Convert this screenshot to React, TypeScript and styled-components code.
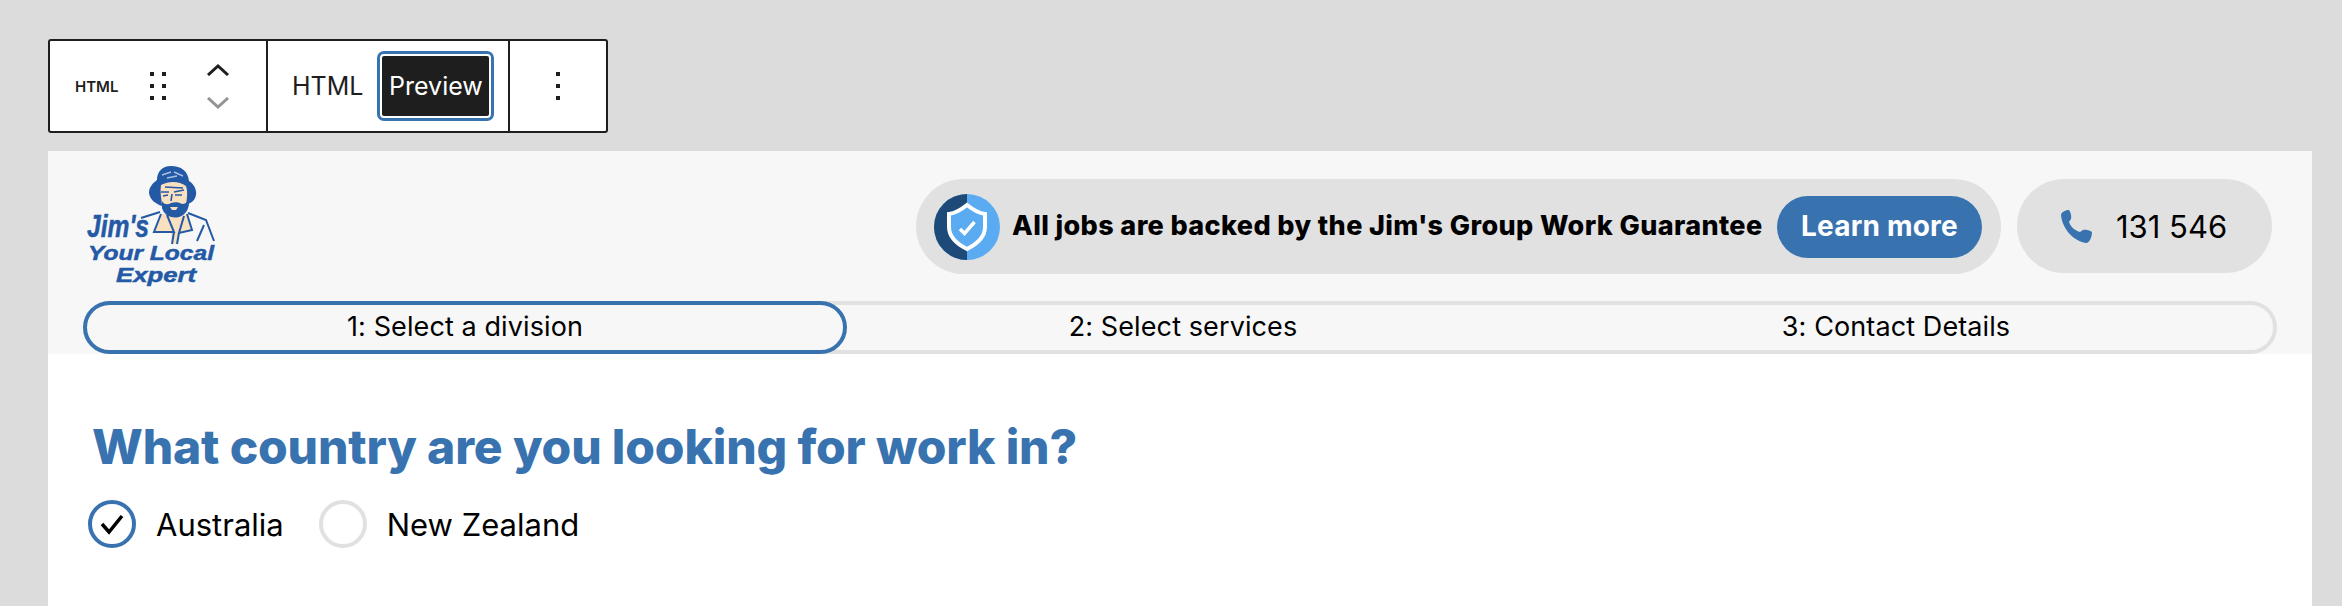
import React from 'react';
import styled, { createGlobalStyle } from 'styled-components';

const BLUE = '#3873b0';
const PILL = '#e1e1e1';
const LOGO_BLUE = '#2359a5';
const SKIN = '#f8e0c0';
const TEXT_FONT = '"Inter", "Liberation Sans", sans-serif';

const GlobalStyle = createGlobalStyle`
  html, body {
    margin: 0;
    background: #dcdcdc;
  }
  body {
    font-family: ${TEXT_FONT};
    color: #000;
  }
`;

const Page = styled.div`
  box-sizing: border-box;
  width: 2342px;
  height: 606px;
  padding: 39px 30px 0 48px;
  overflow: hidden;
`;

const Toolbar = styled.div`
  box-sizing: border-box;
  width: 560px;
  height: 94px;
  margin-bottom: 18px;
  display: flex;
  background: #fff;
  border: 2px solid #1e1e1e;
  border-radius: 3px;
`;

const ToolGroup = styled.div<{ $width: number; $center?: boolean }>`
  box-sizing: border-box;
  width: ${(p) => p.$width}px;
  display: flex;
  align-items: center;
  justify-content: ${(p) => (p.$center ? 'center' : 'flex-start')};
  border-right: 2px solid #1e1e1e;

  &:last-child {
    border-right: 0;
  }
`;

const HtmlBadge = styled.span`
  margin-left: 25px;
  width: 60px;
  font-size: 15px;
  font-weight: 600;
  color: #1e1e1e;
`;

const DragHandle = styled.div`
  display: flex;
  margin-left: 15px;
`;

const Movers = styled.div`
  margin-left: 40px;
  display: flex;
  flex-direction: column;
  gap: 21px;
`;

const ModeLabel = styled.span`
  margin-left: 24px;
  font-size: 25px;
  color: #1e1e1e;
`;

const PreviewButton = styled.button`
  box-sizing: border-box;
  margin-left: 17px;
  width: 111px;
  height: 64px;
  padding: 0;
  font-family: ${TEXT_FONT};
  font-size: 25px;
  color: #fff;
  background: #1e1e1e;
  border: 2px solid #fff;
  border-radius: 4px;
  outline: 3px solid ${BLUE};
`;

const Panel = styled.main`
  width: 2264px;
  height: 455px;
  background: #fff;
`;

const Header = styled.header`
  box-sizing: border-box;
  height: 203px;
  padding: 12px 35px 0;
  background: #f7f7f7;
`;

const TopRow = styled.div`
  display: flex;
  align-items: flex-start;
  height: 130px;
  padding-right: 5px;
  margin-bottom: 8px;
`;

const Logo = styled.svg`
  flex: none;
`;

const LogoText = styled.text`
  font-family: "Liberation Sans", sans-serif;
  font-weight: 700;
  font-style: italic;
  fill: ${LOGO_BLUE};
  stroke: ${LOGO_BLUE};
  stroke-width: 0.5px;
`;

const GuaranteePill = styled.div`
  box-sizing: border-box;
  margin: 16px 0 0 auto;
  width: 1085px;
  height: 95px;
  padding: 0 19px 0 18px;
  display: flex;
  align-items: center;
  background: ${PILL};
  border-radius: 48px;
`;

const BadgeIcon = styled.svg`
  flex: none;
`;

const GuaranteeText = styled.span`
  margin-left: 12px;
  padding-bottom: 2px;
  font-size: 27px;
  font-weight: 800;
  letter-spacing: 0.38px;
  white-space: nowrap;
`;

const LearnMore = styled.a`
  box-sizing: border-box;
  margin-left: auto;
  width: 205px;
  height: 62px;
  padding-bottom: 2px;
  display: flex;
  align-items: center;
  justify-content: center;
  font-size: 28px;
  font-weight: 700;
  letter-spacing: 0.2px;
  color: #fff;
  background: ${BLUE};
  border-radius: 31px;
`;

const PhonePill = styled.div`
  box-sizing: border-box;
  margin: 16px 0 0 16px;
  width: 255px;
  height: 94px;
  padding-left: 43px;
  display: flex;
  align-items: center;
  gap: 24px;
  font-size: 31px;
  background: ${PILL};
  border-radius: 47px;
`;

const Stepper = styled.div`
  box-sizing: border-box;
  height: 53px;
  display: grid;
  grid-template-columns: 760px 672px 1fr;
  border: 4px solid ${PILL};
  border-radius: 27px;
`;

const Step = styled.div<{ $active?: boolean }>`
  padding-bottom: 2px;
  display: flex;
  align-items: center;
  justify-content: center;
  font-size: 27px;
  letter-spacing: 0.1px;
  ${(p) =>
    p.$active &&
    `
    margin: -4px 0 -4px -4px;
    border: 4px solid ${BLUE};
    border-radius: 27px;
  `}
`;

const Content = styled.section`
  padding: 64px 40px 0;
`;

const Title = styled.h1`
  margin: 0 0 24px 4px;
  font-size: 48px;
  line-height: 58px;
  font-weight: 800;
  letter-spacing: -0.15px;
  color: ${BLUE};
  white-space: nowrap;
`;

const Options = styled.div`
  display: flex;
  align-items: center;
`;

const Option = styled.label<{ $gap: number }>`
  display: flex;
  align-items: center;
  margin-right: ${(p) => p.$gap}px;
  font-size: 31px;
`;

const Radio = styled.span<{ $checked?: boolean }>`
  box-sizing: border-box;
  width: 48px;
  height: 48px;
  margin-right: 20px;
  display: flex;
  align-items: center;
  justify-content: center;
  border: 4px solid ${(p) => (p.$checked ? BLUE : PILL)};
  border-radius: 50%;
`;

const Chevron = ({ color, d }: { color: string; d: string }) => (
  <svg width="24" height="12" viewBox="0 0 24 12" fill="none">
    <path d={d} stroke={color} strokeWidth="3" />
  </svg>
);

const Dots = ({ columns }: { columns: number[] }) => {
  const width = columns.length > 1 ? 16 : 5;
  return (
    <svg width={width} height="28" viewBox={`0 0 ${width} 28`} fill="#1e1e1e">
      {columns.map((x) =>
        [0, 12, 24].map((y) => <rect key={`${x}-${y}`} x={x} y={y} width="4" height="4" />)
      )}
    </svg>
  );
};

const JimsLogo = () => (
  <Logo width="140" height="130" viewBox="84 163 140 130">
    {/* hat */}
    <path
      d="M172 166 C182 166 189 171 190 181 C195 184 198 190 197 195 C196 201 191 204 187 204 L163 206 C157 204 151 200 150 193 C150 187 154 183 158 180 C158 172 163 166 172 166 Z"
      fill={LOGO_BLUE}
    />
    <path d="M163 175 L172 172 M175 172 L184 176 M168 178 L178 176" stroke="#a9c0e2" strokeWidth="1.5" fill="none" />
    {/* face */}
    <path d="M162 185 C170 181 180 181 187 186 C189 192 188 198 187 205 L163 205 C162 197 161 191 162 185 Z" fill={SKIN} />
    <path
      d="M162 192 L170 192 M175 192 L185 190 M164 196 L169 195 M176 195 L183 195 M173 194 L172 201 M166 187 L184 188"
      stroke={LOGO_BLUE}
      strokeWidth="1.6"
      fill="none"
    />
    {/* shirt */}
    <path d="M163 214 L189 214 L192 231 L180 234 L178 244 L173 244 L172 233 L156 232 Z" fill={SKIN} />
    <path
      d="M142 218 L161 212 M162 214 L155 232 L175 232 L168 215 M189 213 L207 220 L215 241 M188 214 L193 230 L180 233 L185 216 M205 225 L198 241 M175 232 L173 244 M180 233 L178 244"
      stroke={LOGO_BLUE}
      strokeWidth="2"
      fill="none"
    />
    {/* beard */}
    <path
      d="M163 201 C165 205 169 205 172 203 C175 202 180 202 183 204 C186 204 189 202 190 199 C191 208 187 215 180 217 C172 219 165 215 163 208 Z"
      fill={LOGO_BLUE}
    />
    <path d="M171 207 L179 207 L177 210 L173 210 Z" fill={SKIN} />
    <LogoText x="88" y="237" fontSize="31" textLength="62" lengthAdjust="spacingAndGlyphs">
      Jim&apos;s
    </LogoText>
    <LogoText x="89" y="260" fontSize="21" textLength="126" lengthAdjust="spacingAndGlyphs">
      Your Local
    </LogoText>
    <LogoText x="117" y="282" fontSize="21" textLength="80" lengthAdjust="spacingAndGlyphs">
      Expert
    </LogoText>
  </Logo>
);

const ShieldBadge = () => (
  <BadgeIcon width="66" height="66" viewBox="0 0 66 66">
    <circle cx="33" cy="33" r="33" fill="#5aabf1" />
    <path d="M33 0 A33 33 0 0 0 33 66 Z" fill="#1d4a78" />
    <path
      d="M33 11 C38 15 44 19 51 20 L51 33 C51 43 43 50 33 55 C23 50 15 43 15 33 L15 20 C22 19 28 15 33 11 Z"
      fill="#5aabf1"
      stroke="#fff"
      strokeWidth="4"
    />
    <path d="M26 35 L30.5 39.5 L40.5 28" fill="none" stroke="#fff" strokeWidth="3.5" />
  </BadgeIcon>
);

const PhoneIcon = () => (
  <BadgeIcon width="32" height="33" viewBox="0 0 32 33">
    <path
      d="M1 5 C1 2 6 0 9 0 C10 1 12 6 11 9 L9 12 C11 17 14 20 20 22 L23 20 C26 19 31 21 32 22 C32 26 30 33 26 33 C13 31 2 18 1 5 Z"
      fill={BLUE}
    />
  </BadgeIcon>
);

const App = () => (
  <Page>
    <GlobalStyle />
    <Toolbar>
      <ToolGroup $width={218}>
        <HtmlBadge>HTML</HtmlBadge>
        <DragHandle>
          <Dots columns={[0, 12]} />
        </DragHandle>
        <Movers>
          <Chevron color="#1e1e1e" d="M2 11 L12 2 L22 11" />
          <Chevron color="#949494" d="M2 1 L12 10 L22 1" />
        </Movers>
      </ToolGroup>
      <ToolGroup $width={242}>
        <ModeLabel>HTML</ModeLabel>
        <PreviewButton>Preview</PreviewButton>
      </ToolGroup>
      <ToolGroup $width={96} $center>
        <Dots columns={[0]} />
      </ToolGroup>
    </Toolbar>
    <Panel>
      <Header>
        <TopRow>
          <JimsLogo />
          <GuaranteePill>
            <ShieldBadge />
            <GuaranteeText>All jobs are backed by the Jim&apos;s Group Work Guarantee</GuaranteeText>
            <LearnMore>Learn more</LearnMore>
          </GuaranteePill>
          <PhonePill>
            <PhoneIcon />
            131 546
          </PhonePill>
        </TopRow>
        <Stepper>
          <Step $active>1: Select a division</Step>
          <Step>2: Select services</Step>
          <Step>3: Contact Details</Step>
        </Stepper>
      </Header>
      <Content>
        <Title>What country are you looking for work in?</Title>
        <Options>
          <Option $gap={35}>
            <Radio $checked>
              <svg width="28" height="24" viewBox="0 0 28 24" fill="none">
                <path d="M4 12 L11 20 L24 4" stroke="#000" strokeWidth="3.5" />
              </svg>
            </Radio>
            Australia
          </Option>
          <Option $gap={32}>
            <Radio />
            New Zealand
          </Option>
        </Options>
      </Content>
    </Panel>
  </Page>
);

export default App;
